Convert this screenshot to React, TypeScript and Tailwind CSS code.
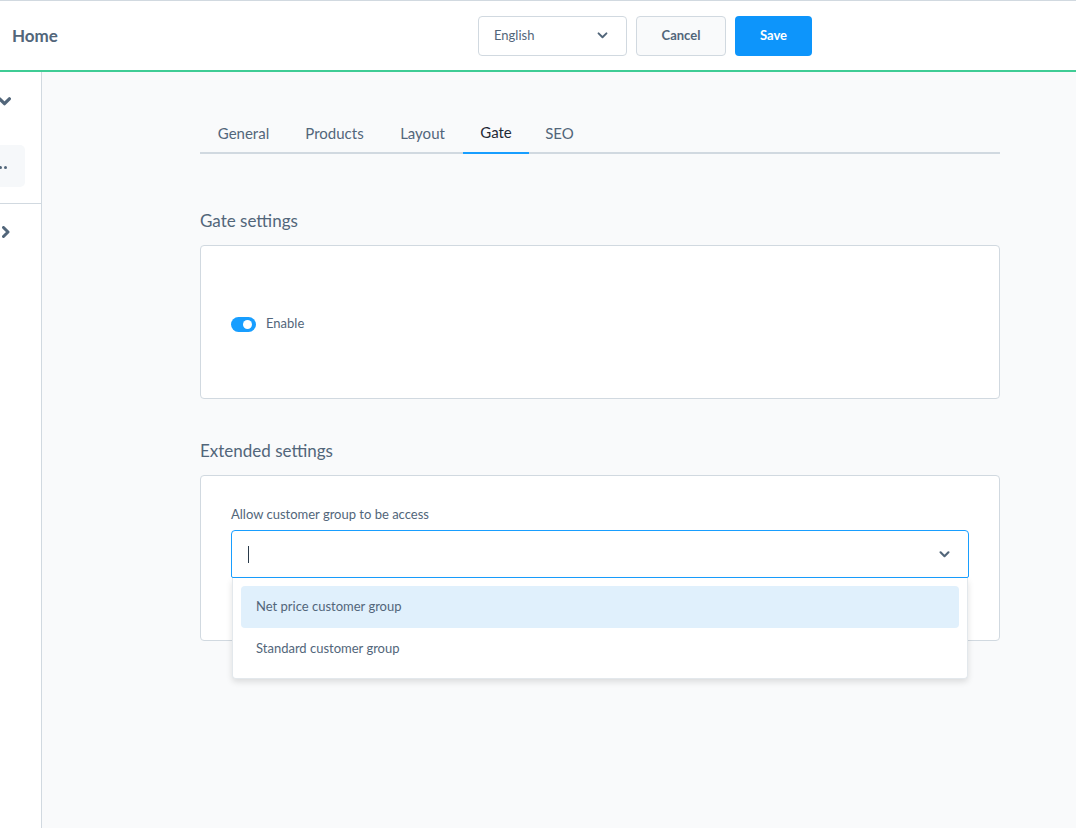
import React from "react";

function ChevronDown({ className = "", sw = 2 }: { className?: string; sw?: number }) {
  return (
    <svg viewBox="0 0 12 8" className={className} fill="none">
      <path d="M1.5 1.5 6 6l4.5-4.5" stroke="currentColor" strokeWidth={sw} strokeLinecap="round" strokeLinejoin="round" />
    </svg>
  );
}

function ChevronRight({ className = "", sw = 2 }: { className?: string; sw?: number }) {
  return (
    <svg viewBox="0 0 8 12" className={className} fill="none">
      <path d="M1.5 1.5 6 6l-4.5 4.5" stroke="currentColor" strokeWidth={sw} strokeLinecap="round" strokeLinejoin="round" />
    </svg>
  );
}

export default function App() {
  const tabs: { label: string; w: string }[] = [
    { label: "General", w: "w-[87px]" },
    { label: "Products", w: "w-[95px]" },
    { label: "Layout", w: "w-[81px]" },
    { label: "Gate", w: "w-[66px]" },
    { label: "SEO", w: "w-[61px]" },
  ];
  return (
    <div
      className="w-[1076px] h-[828px] overflow-hidden flex flex-col bg-[#f9fafb] text-[#52667a]"
      style={{ fontFamily: "Lato, 'Open Sans', sans-serif" }}
    >
      {/* Header */}
      <header className="h-[72px] shrink-0 bg-white border-t border-t-[#d1d9e0] border-b-2 border-b-[#3fcc95] flex items-center">
        <div className="pl-[12px] text-[17px] font-bold text-[#52667a]">Home</div>
        <div className="ml-auto mr-[264px] flex items-center gap-[9px]">
          <div className="w-[149px] h-[40px] border border-[#d1d9e0] rounded-[4px] bg-white flex items-center justify-between pl-[15px] pr-[18px] text-[13px]">
            <span>English</span>
            <ChevronDown className="w-[11px] h-[7px] text-[#52667a]" sw={2.2} />
          </div>
          <button className="w-[90px] h-[40px] border border-[#d1d9e0] rounded-[4px] bg-[#f9fafb] text-[13px] font-bold text-[#52667a]">
            Cancel
          </button>
          <button className="w-[77px] h-[40px] rounded-[4px] bg-[#0d95fb] text-[13px] font-bold text-white">
            Save
          </button>
        </div>
      </header>

      <div className="flex flex-1 min-h-0">
        {/* Sidebar */}
        <aside className="w-[42px] shrink-0 bg-white border-r border-[#d1d9e0] flex flex-col">
          <div className="h-[57px] flex items-center pt-[2px]">
            <ChevronDown className="w-[13px] h-[9px] -ml-[2px] text-[#52667a]" sw={3} />
          </div>
          <div className="h-[42px] w-[25px] mt-[16px] bg-[#f6f8fa] rounded-r-[5px] flex items-center">
            <div className="flex gap-[2px] -ml-[1px] mt-[2px]">
              <span className="w-[3px] h-[3px] rounded-full bg-[#52667a]" />
              <span className="w-[3px] h-[3px] rounded-full bg-[#52667a]" />
            </div>
          </div>
          <div className="mt-[16px] border-t border-[#d1d9e0]" />
          <div className="h-[56px] flex items-center pl-[2px]">
            <ChevronRight className="w-[8px] h-[12px] text-[#52667a]" sw={3} />
          </div>
        </aside>

        {/* Main */}
        <main className="flex-1 pl-[158px] pt-[41px]">
          <div className="w-[800px]">
            {/* Tabs */}
            <div className="flex border-b-2 border-[#d1d9e0] h-[41px]">
              {tabs.map((t) => (
                <div
                  key={t.label}
                  className={
                    t.label === "Gate"
                      ? `${t.w} h-[41px] -mb-[2px] flex items-center justify-center text-[15px] text-[#1f2a36] border-b-2 border-[#189eff]`
                      : `${t.w} h-[41px] flex items-center justify-center text-[15px] text-[#52667a]`
                  }
                >
                  {t.label}
                </div>
              ))}
            </div>

            {/* Gate settings */}
            <h2 className="mt-[55px] text-[17px] leading-[24px] text-[#52667a]">Gate settings</h2>
            <div className="mt-[12px] h-[154px] bg-white border border-[#d1d9e0] rounded-[4px] px-[30px] flex items-center">
              <div className="flex items-center gap-[10px] mt-[4px]">
                <div className="w-[25px] h-[15px] rounded-full bg-[#189eff] relative">
                  <div className="absolute right-[4px] top-[3px] w-[9px] h-[9px] rounded-full bg-white" />
                </div>
                <span className="text-[13px] text-[#52667a]">Enable</span>
              </div>
            </div>

            {/* Extended settings */}
            <h2 className="mt-[40px] text-[17px] leading-[24px] text-[#52667a]">Extended settings</h2>
            <div className="mt-[12px] h-[166px] bg-white border border-[#d1d9e0] rounded-[4px] px-[30px] pt-[29px] relative">
              <div className="text-[13px] leading-[18px] text-[#52667a]">Allow customer group to be access</div>
              <div className="mt-[7px] relative">
                <div className="h-[48px] border border-[#189eff] rounded-t-[4px] rounded-b-[2px] bg-white flex items-center pl-[16px] pr-[18px]">
                  <div className="w-[1px] h-[17px] bg-[#2a3a4a]" />
                  <ChevronDown className="ml-auto w-[11px] h-[7px] text-[#52667a]" sw={2.4} />
                </div>
                {/* Dropdown */}
                <div className="absolute left-[1px] right-[1px] top-[48px] z-10 bg-white rounded-b-[4px] border border-[#e3e8ec] border-t-0 shadow-[0_3px_6px_rgba(0,0,0,0.12)] p-[8px]">
                  <div className="h-[42px] rounded-[4px] bg-[#e0f0fc] flex items-center px-[15px] text-[13px] text-[#52667a]">
                    Net price customer group
                  </div>
                  <div className="h-[42px] rounded-[4px] flex items-center px-[15px] text-[13px] text-[#52667a]">
                    Standard customer group
                  </div>
                </div>
              </div>
            </div>
          </div>
        </main>
      </div>
    </div>
  );
}
